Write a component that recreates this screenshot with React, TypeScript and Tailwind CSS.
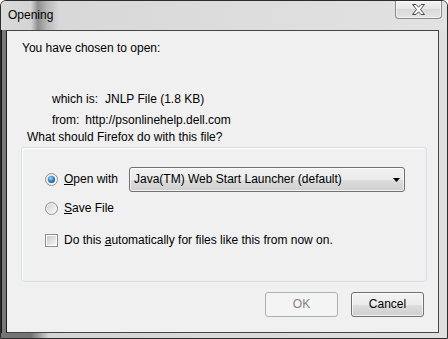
import { ReactNode } from 'react'

const Radio = ({ checked }: { checked?: boolean }) => (
    <span className="flex h-[13px] w-[13px] shrink-0 items-center justify-center rounded-full border border-[#8e8f8f] bg-[linear-gradient(135deg,#cfcfcf,#fbfbfb)] shadow-[inset_0_0_0_1px_#f4f4f4]">
        {checked && (
            <span className="h-[7px] w-[7px] rounded-full bg-[radial-gradient(circle_at_40%_35%,#a8dcff_0%,#3a8ad2_40%,#0d3a70_100%)]" />
        )}
    </span>
)

const Checkbox = () => (
    <span className="flex h-[13px] w-[13px] shrink-0 items-center justify-center border border-[#8e8f8f] bg-white">
        <span className="h-[9px] w-[9px] bg-[linear-gradient(135deg,#cbcbcb,#f5f5f5)]" />
    </span>
)

const Button = ({ children, disabled }: { children: ReactNode; disabled?: boolean }) => (
    <button
        className={
            disabled
                ? 'flex h-[25px] w-[73px] items-center justify-center rounded-[3px] border border-[#adb2b5] bg-[#f4f4f4] text-[#838383]'
                : 'flex h-[25px] w-[73px] items-center justify-center rounded-[3px] border border-[#707070] bg-[linear-gradient(to_bottom,#f2f2f2_0%,#ebebeb_50%,#dddddd_50%,#cfcfcf_100%)] text-black shadow-[inset_0_0_0_1px_rgba(255,255,255,0.7)]'
        }
    >
        {children}
    </button>
)

const App = () => {
    return (
        <div className="flex h-[339px] w-[448px] flex-col overflow-hidden rounded-t-[6px] border border-[#2c2c2c] bg-[#e0e0e0] font-['Liberation_Sans',Arial,sans-serif] text-[12px] leading-[15px] text-black">
            {/* Title bar */}
            <div className="flex h-[29px] shrink-0 items-start justify-between bg-[linear-gradient(to_right,#dadada_0px,#d4d4d4_30px,#8e8e8e_37px,#b8b8b8_46px,#d8d8d8_58px,#e2e2e2_100%)]">
                <span className="pl-[7px] pt-[7px]">Opening</span>
                <div className="mr-[5px] flex h-[18px] w-[47px] items-center justify-center rounded-b-[4px] border border-t-0 border-[#8a8a8a] bg-[linear-gradient(to_bottom,#f3f3f3,#e6e6e6_50%,#d9d9d9_50%,#e4e4e4)] shadow-[inset_0_0_0_1px_rgba(255,255,255,0.6)]">
                    <svg width="13" height="11" viewBox="0 0 13 11">
                        <polygon
                            points="0.5,0.5 4,0.5 6.5,3.2 9,0.5 12.5,0.5 8.5,5.5 12.5,10.5 9,10.5 6.5,7.8 4,10.5 0.5,10.5 4.5,5.5"
                            fill="#ffffff"
                            stroke="#4a4a4a"
                            strokeWidth="1"
                            strokeLinejoin="round"
                        />
                    </svg>
                </div>
            </div>

            {/* Frame + client area */}
            <div className="flex flex-1">
                <div className="w-[5px] border-l border-[#141414] bg-[#787878]" />
                <div className="flex flex-1 flex-col border border-[#454545] border-l-[#1c1c1c] bg-[#f0f0f0]">
                    <p className="mt-[10px] pl-[15px]">You have chosen to open:</p>
                    <p className="mt-[36px] flex gap-[7px] pl-[45px]">
                        <span>which is:</span>
                        <span>JNLP File (1.8 KB)</span>
                    </p>
                    <p className="mt-[6px] flex gap-[6px] pl-[45px]">
                        <span>from:</span>
                        <span>http://psonlinehelp.dell.com</span>
                    </p>
                    <p className="mt-[2px] pl-[20px]">What should Firefox do with this file?</p>

                    {/* Group box */}
                    <div className="ml-[14px] mt-[2px] flex w-[406px] flex-col rounded-[3px] border border-[#d5dfe5] pb-[28px] pl-[23px] pt-[19px] shadow-[inset_1px_1px_0_#ffffff]">
                        <div className="flex h-[25px] items-center">
                            <Radio checked />
                            <span className="ml-[6px] w-[65px]">
                                <span className="underline">O</span>pen with
                            </span>
                            <div className="flex h-[25px] w-[276px] items-center justify-between rounded-[3px] border border-[#707070] bg-[linear-gradient(to_bottom,#f2f2f2_0%,#ebebeb_50%,#dddddd_50%,#cfcfcf_100%)] pl-[4px] pr-[4px] shadow-[inset_0_0_0_1px_rgba(255,255,255,0.7)]">
                                <span>Java(TM) Web Start Launcher (default)</span>
                                <svg width="7" height="4" viewBox="0 0 7 4">
                                    <polygon points="0,0 7,0 3.5,4" fill="#000000" />
                                </svg>
                            </div>
                        </div>
                        <div className="mt-[4px] flex h-[25px] items-center">
                            <Radio />
                            <span className="ml-[6px]">
                                <span className="underline">S</span>ave File
                            </span>
                        </div>
                        <div className="mt-[7px] flex h-[25px] items-center">
                            <Checkbox />
                            <span className="ml-[6px]">
                                Do this <span className="underline">a</span>utomatically for files like this from now on.
                            </span>
                        </div>
                    </div>

                    {/* Buttons */}
                    <div className="mt-[10px] flex justify-end gap-[13px] pr-[14px]">
                        <Button disabled>OK</Button>
                        <Button>Cancel</Button>
                    </div>
                </div>
                <div className="w-[8px] bg-[#e0e0e0]" />
            </div>

            {/* Bottom frame */}
            <div className="h-[5px] shrink-0 bg-[linear-gradient(to_right,#747474_0px,#747474_30px,#d4d4d4_48px,#e0e0e0_100%)]" />
        </div>
    )
}

export default App
